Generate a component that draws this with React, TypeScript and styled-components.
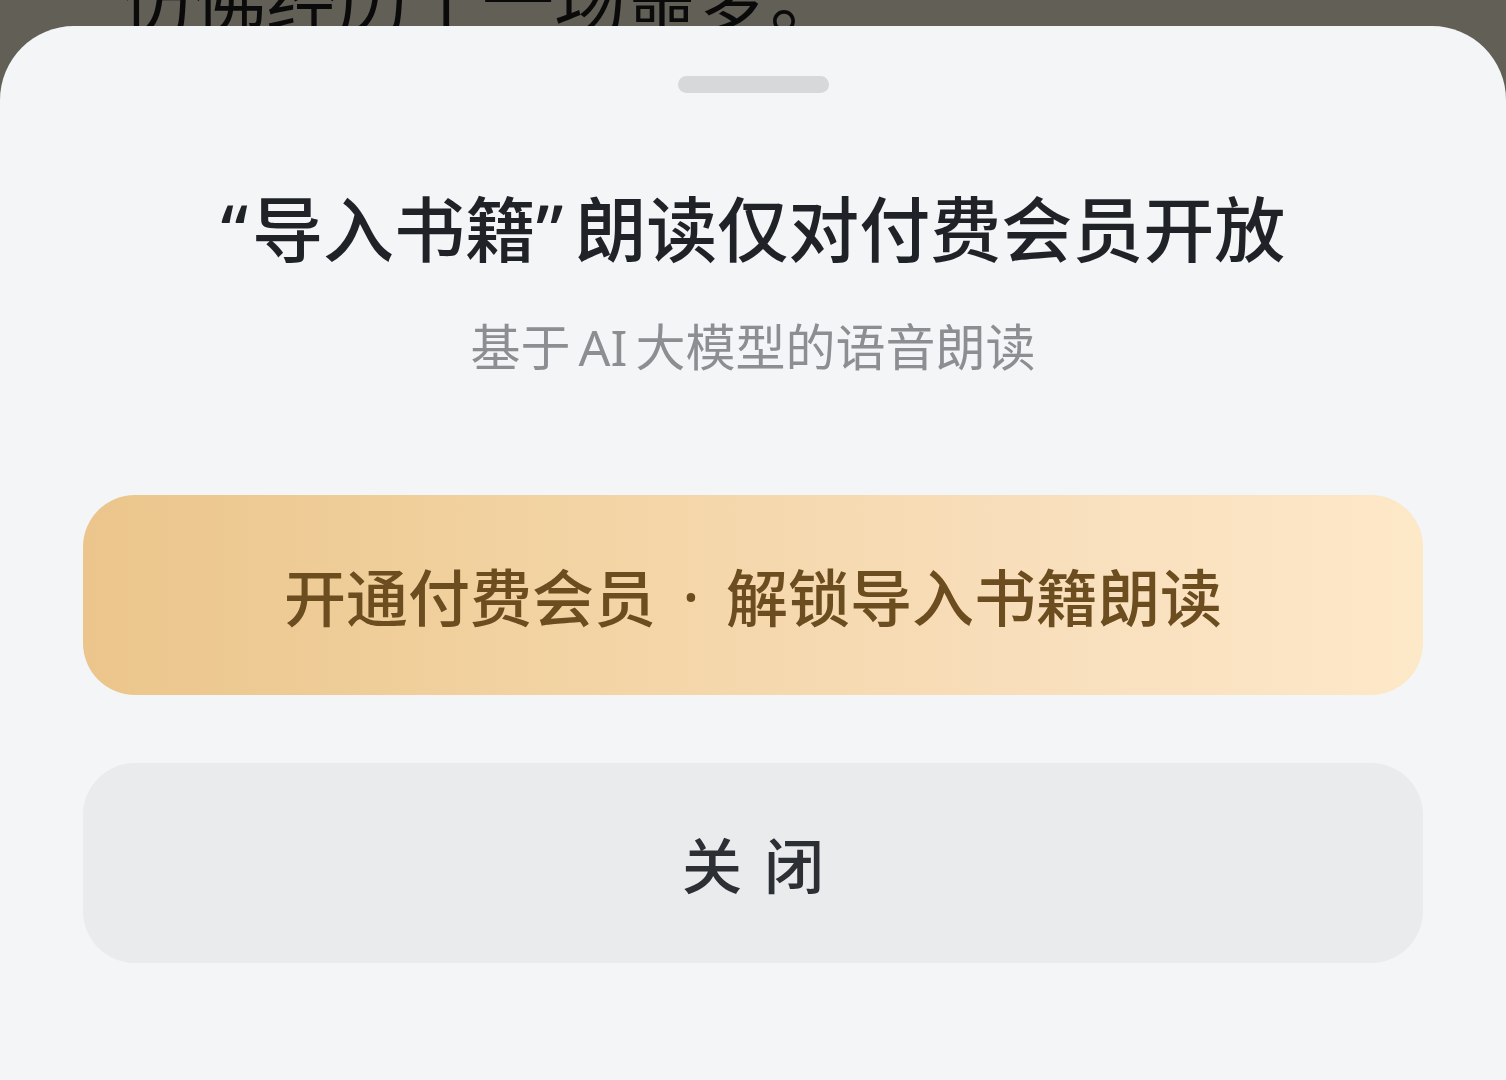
import React from 'react';
import styled, { createGlobalStyle } from 'styled-components';

const GlobalStyle = createGlobalStyle`
  html, body {
    margin: 0;
    padding: 0;
    background: #625f57;
  }
  body {
    font-family: "Noto Sans", "Noto Sans CJK SC", sans-serif;
  }
`;

const Page = styled.div`
  position: relative;
  width: 1506px;
  height: 1080px;
  overflow: hidden;
  background: #625f57;
`;

const BackdropLine = styled.div`
  margin: -37px 0 0 122px;
  font-size: 72px;
  line-height: 1;
  color: #0a0a0a;
  white-space: nowrap;
`;

const Sheet = styled.section`
  position: absolute;
  top: 26px;
  left: 0;
  right: 0;
  bottom: 0;
  display: flex;
  flex-direction: column;
  align-items: center;
  padding: 50px 83px 0;
  background: #f3f5f7;
  border-radius: 74px 74px 0 0;
`;

const Handle = styled.div`
  width: 151px;
  height: 17px;
  border-radius: 9px;
  background: #d6d8da;
`;

const Title = styled.h1`
  margin: 93px 0 0;
  font-size: 71px;
  font-weight: 500;
  line-height: 86px;
  color: #1f2226;
  white-space: nowrap;
`;

const QuoteGap = styled.span`
  display: inline-block;
  width: ${(p: { $w: number }) => p.$w}px;
`;

const Subtitle = styled.p`
  margin: 45px 0 0;
  font-size: 50px;
  font-weight: 400;
  line-height: 60px;
  color: #8c8e91;
  white-space: nowrap;
`;

const Latin = styled.span`
  margin: 0 8px;
`;

const ActionButton = styled.button<{ $variant: 'gold' | 'plain'; $gap: number }>`
  display: flex;
  align-items: center;
  justify-content: center;
  width: 100%;
  height: 200px;
  margin-top: ${(p) => p.$gap}px;
  border: none;
  border-radius: 52px;
  font-family: inherit;
  font-size: ${(p) => (p.$variant === 'gold' ? 62 : 60)}px;
  font-weight: 500;
  color: ${(p) => (p.$variant === 'gold' ? '#6b4d20' : '#2c2f34')};
  background: ${(p) =>
    p.$variant === 'gold'
      ? 'linear-gradient(90deg, #ebc58b 0%, #f2d3a2 35%, #f8debb 70%, #fde8c8 100%)'
      : '#e9ebed'};
  white-space: nowrap;
  cursor: pointer;
`;

const Dot = styled.span`
  display: inline-block;
  width: 70px;
  text-align: center;
`;

const Spaced = styled.span`
  letter-spacing: 22px;
  margin-right: -22px;
`;

export default function App() {
  return (
    <>
      <GlobalStyle />
      <Page>
        <BackdropLine>仿佛经历了一场噩梦。</BackdropLine>
        <Sheet>
          <Handle />
          <Title>
            “<QuoteGap $w={4} />导入书籍”<QuoteGap $w={12} />朗读仅对付费会员开放
          </Title>
          <Subtitle>
            基于<Latin>AI</Latin>大模型的语音朗读
          </Subtitle>
          <ActionButton $variant="gold" $gap={118}>
            开通付费会员<Dot>·</Dot>解锁导入书籍朗读
          </ActionButton>
          <ActionButton $variant="plain" $gap={68}>
            <Spaced>关闭</Spaced>
          </ActionButton>
        </Sheet>
      </Page>
    </>
  );
}
